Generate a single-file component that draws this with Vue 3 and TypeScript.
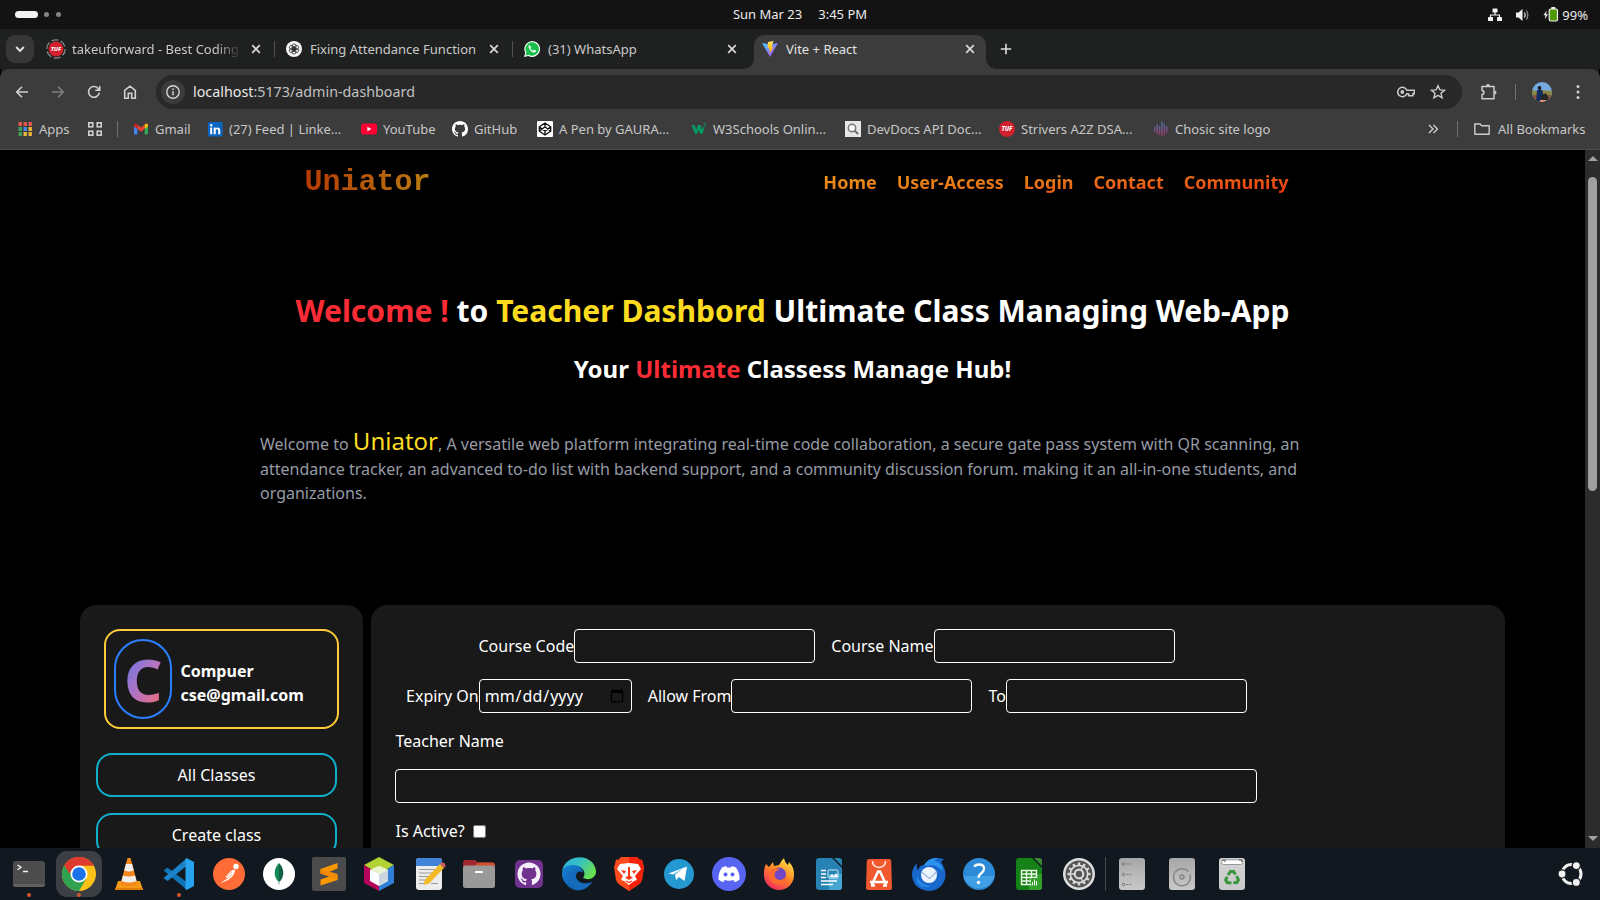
<script setup lang="ts">
interface Bookmark { icon: string; label: string }

const tabs = [
  { icon: 'tuf', title: 'takeuforward - Best Coding', active: false },
  { icon: 'gpt', title: 'Fixing Attendance Function', active: false },
  { icon: 'whatsapp', title: '(31) WhatsApp', active: false },
  { icon: 'vite', title: 'Vite + React', active: true },
]

const bookmarks: Bookmark[] = [
  { icon: 'gmail', label: 'Gmail' },
  { icon: 'linkedin', label: '(27) Feed | Linke...' },
  { icon: 'youtube', label: 'YouTube' },
  { icon: 'github', label: 'GitHub' },
  { icon: 'codepen', label: 'A Pen by GAURA...' },
  { icon: 'w3', label: 'W3Schools Onlin...' },
  { icon: 'devdocs', label: 'DevDocs API Doc...' },
  { icon: 'tufmark', label: 'Strivers A2Z DSA...' },
  { icon: 'chosic', label: 'Chosic site logo' },
]

const navLinks = ['Home', 'User-Access', 'Login', 'Contact', 'Community']
const sideButtons = ['All Classes', 'Create class']

const appColors = ['#e35850', '#e35850', '#e35850', '#3f9f5b', '#4a8af0', '#e9b63a', '#3f9f5b', '#e9b63a', '#e9b63a']
const chosicBars = [
  [1, 6, 5], [3.4, 3, 10], [5.8, 5, 9], [8.2, 0.5, 15], [10.6, 3, 11], [13, 5, 7],
]

const dockApps = [
  'terminal', 'chrome', 'vlc', 'vscode', 'postman', 'mongo', 'sublime', 'netbeans', 'editor', 'files',
  'ghdesktop', 'edge', 'brave', 'telegram', 'discord', 'firefox', 'writer', 'appcenter', 'thunderbird',
  'help', 'calc', 'settings',
]
const dockPlaces = ['drive', 'disk', 'trash']
const running = ['terminal', 'chrome', 'vscode']

const githubPath =
  'M8 0C3.58 0 0 3.58 0 8c0 3.54 2.29 6.53 5.47 7.59.4.07.55-.17.55-.38 0-.19-.01-.82-.01-1.49-2.01.37-2.53-.49-2.69-.94-.09-.23-.48-.94-.82-1.13-.28-.15-.68-.52-.01-.53.63-.01 1.08.58 1.23.82.72 1.21 1.87.87 2.33.66.07-.52.28-.87.51-1.07-1.78-.2-3.64-.89-3.64-3.95 0-.87.31-1.59.82-2.15-.08-.2-.36-1.02.08-2.12 0 0 .67-.21 2.2.82.64-.18 1.32-.27 2-.27s1.36.09 2 .27c1.53-1.04 2.2-.82 2.2-.82.44 1.1.16 1.92.08 2.12.51.56.82 1.27.82 2.15 0 3.07-1.87 3.75-3.65 3.95.29.25.54.73.54 1.48 0 1.07-.01 1.93-.01 2.2 0 .21.15.46.55.38A8.01 8.01 0 0 0 16 8c0-4.42-3.58-8-8-8z'
const ticks = [0, 30, 60, 90, 120, 150, 180, 210, 240, 270, 300, 330]
</script>

<template>
  <div class="screen">
    <header class="topbar">
      <div class="workspaces"><i class="pill"></i><i class="dot"></i><i class="dot"></i></div>
      <div class="clock"><span>Sun Mar 23</span><span>3:45 PM</span></div>
      <div class="status">
        <svg width="16" height="14" viewBox="0 0 16 14">
          <g fill="#f2f2f2"><rect x="5.5" y="0.5" width="5" height="4" rx=".6" /><rect x="1" y="9" width="5" height="4" rx=".6" /><rect x="10" y="9" width="5" height="4" rx=".6" /></g>
          <path d="M8 4v3M3.5 9.500V7h9v2.500" fill="none" stroke="#f2f2f2" stroke-width="1.200" />
        </svg>
        <svg class="volume" width="16" height="14" viewBox="0 0 16 14">
          <path d="M1 4.500h2.500L7.500 1v12L3.500 9.500H1z" fill="#f2f2f2" />
          <path d="M9.300 4.500q1.700 2.500 0 5" fill="none" stroke="#ddd" stroke-width="1.300" />
          <path d="M11.300 2.500q3 4.500 0 9" fill="none" stroke="#888" stroke-width="1.300" />
        </svg>
        <svg class="battery" width="16" height="15" viewBox="0 0 16 15">
          <path d="M3.600 3.500L.5 8.300h1.900l-.5 3.900L5 7.200H3.100z" fill="#eee" />
          <rect x="6.200" y="2" width="8.300" height="12" rx="1.500" fill="#4e9a06" stroke="#f2f2f2" stroke-width="1.200" />
          <rect x="8.300" y="0" width="4" height="2" fill="#f2f2f2" />
        </svg>
        <span>99%</span>
      </div>
    </header>

    <div class="tabstrip">
      <button class="tab-search">
        <svg width="12" height="12" viewBox="0 0 12 12"><path d="M2.200 4L6 7.800 9.800 4" fill="none" stroke="#e4e4e4" stroke-width="1.900" /></svg>
      </button>
      <div v-for="tab in tabs" :key="tab.title" class="tab" :class="{ active: tab.active }">
        <svg v-if="tab.icon === 'tuf'" class="fav wide" viewBox="0 0 20 20">
          <circle cx="10" cy="10" r="9.200" fill="none" stroke="#85898b" stroke-width="1.300" stroke-dasharray="7 2.600" />
          <circle cx="10" cy="10" r="7.500" fill="#d3202f" />
          <text x="10" y="12.200" text-anchor="middle" font-size="6" font-weight="800" font-style="italic" fill="#fff">TUF</text>
        </svg>
        <svg v-else-if="tab.icon === 'gpt'" class="fav" viewBox="0 0 16 16">
          <circle cx="8" cy="8" r="8" fill="#f7f7f7" />
          <g fill="none" stroke="#222" stroke-width=".75">
            <rect v-for="a in [0, 60, 120, 180, 240, 300]" :key="a" x="6.200" y="2.900" width="3.700" height="5.900" rx="1.800" :transform="`rotate(${a} 8 8)`" />
          </g>
        </svg>
        <svg v-else-if="tab.icon === 'whatsapp'" class="fav" viewBox="0 0 16 16">
          <path d="M0 16l1.200-4.300A7.900 7.900 0 1 1 4.300 14.900z" fill="#f4fff6" />
          <path d="M1.500 14.500l.9-3.100A6.700 6.700 0 1 1 4.700 13.700z" fill="#19be4b" />
          <path d="M5.500 4c-.8.500-1.100 1.500-.8 2.500.8 2.500 3 4.600 5.300 5 1.200.1 2-.6 2.100-1.700l-2-1-1 1C7.900 9.400 6.800 8.300 6.300 7l.8-1z" fill="#fff" />
        </svg>
        <svg v-else class="fav" viewBox="0 0 16 16">
          <defs>
            <linearGradient id="vite-a" x1="0" y1="0" x2="1" y2="1"><stop offset="0" stop-color="#41d1ff" /><stop offset="1" stop-color="#bd34fe" /></linearGradient>
            <linearGradient id="vite-b" x1="0" y1="0" x2="0" y2="1"><stop offset="0" stop-color="#ffea83" /><stop offset=".3" stop-color="#ffd028" /><stop offset="1" stop-color="#ffa800" /></linearGradient>
          </defs>
          <path d="M0 2l8 14 8-14-8 1.400z" fill="url(#vite-a)" />
          <path d="M11.500 0L6 1.100l-.4 6 1.700-.4-.5 2.600 1.100-.4L7.300 13l4.200-7-1.900.3z" fill="url(#vite-b)" />
        </svg>
        <span class="tab-title">{{ tab.title }}</span>
        <svg class="close" viewBox="0 0 10 10"><path d="M1.200 1.200l7.600 7.600M8.800 1.200L1.200 8.800" stroke="#d8d8d8" stroke-width="1.700" /></svg>
      </div>
      <svg class="newtab" width="12" height="12" viewBox="0 0 12 12"><path d="M6 .8v10.400M.8 6h10.400" stroke="#ddd" stroke-width="1.600" /></svg>
    </div>

    <div class="toolbar">
      <svg class="tool" viewBox="0 0 20 20"><path d="M16 10H4.800M10 4.700L4.700 10l5.300 5.300" fill="none" stroke="#d0d0d0" stroke-width="1.600" /></svg>
      <svg class="tool" viewBox="0 0 20 20"><path d="M4 10h11.200M10 4.700l5.300 5.300-5.300 5.300" fill="none" stroke="#7f7f7f" stroke-width="1.600" /></svg>
      <svg class="tool" viewBox="0 0 20 20"><path d="M15.300 10.600A5.400 5.400 0 1 1 13.900 6.200l1.400 1.500M15.700 4v4.200h-4.400" fill="none" stroke="#d0d0d0" stroke-width="1.600" /></svg>
      <svg class="tool" viewBox="0 0 20 20"><path d="M4.700 16.200V8.300L10 4.200l5.300 4.100v7.900h-3.600v-5H8.300v5z" fill="none" stroke="#d0d0d0" stroke-width="1.600" /></svg>
      <div class="omnibox">
        <span class="info">
          <svg width="16" height="16" viewBox="0 0 16 16"><circle cx="8" cy="8" r="6.200" fill="none" stroke="#d6d6d6" stroke-width="1.400" /><path d="M8 7.200v4M8 4.600v1.500" stroke="#d6d6d6" stroke-width="1.500" /></svg>
        </span>
        <span class="url"><b>localhost</b>:5173/admin-dashboard</span>
        <svg class="key" width="18" height="12" viewBox="0 0 18 12">
          <path d="M9.800 4.300A4.700 4.700 0 1 0 9.800 7.700h1.800v2.100h4.300V7.700h1.300V4.300z" fill="none" stroke="#ccc" stroke-width="1.500" /><circle cx="5.300" cy="6" r="1.900" fill="#ccc" />
        </svg>
        <svg class="star" width="16" height="16" viewBox="0 0 16 16"><path d="M8 1.700l1.900 4.200 4.600.4-3.500 3 1.100 4.500L8 11.400l-4.100 2.400L5 9.300l-3.500-3 4.600-.4z" fill="none" stroke="#ccc" stroke-width="1.400" /></svg>
      </div>
      <svg class="ext" width="18" height="18" viewBox="0 0 18 18"><path d="M2 3.500h12v12.200H2v-4.100q2-.2 2-2t-2-2z" fill="none" stroke="#ccc" stroke-width="1.500" stroke-linejoin="round" /><path d="M6 3a2 2 0 0 1 4 0zM14.500 7.500a2 2 0 0 1 0 4z" fill="#ccc" /></svg>
      <i class="bar"></i>
      <svg class="avatar" width="20" height="20" viewBox="0 0 20 20">
        <defs><clipPath id="av"><circle cx="10" cy="10" r="10" /></clipPath></defs>
        <g clip-path="url(#av)">
          <rect width="20" height="20" fill="#75a9df" /><path d="M0 8l5 1 5-1 10 1v12H0z" fill="#8b8a45" /><path d="M0 13h20v8H0z" fill="#85513e" />
          <circle cx="7.500" cy="6" r="1.900" fill="#17191d" /><path d="M5 8h5l2 6 3 2v4H4z" fill="#152d60" /><path d="M9 14l5-3 3 6-7 3z" fill="#262528" /><path d="M8 18h7l-3 2H8z" fill="#ee9b73" />
        </g>
      </svg>
      <svg class="menu" width="4" height="16" viewBox="0 0 4 16"><g fill="#d0d0d0"><circle cx="2" cy="2.500" r="1.500" /><circle cx="2" cy="8" r="1.500" /><circle cx="2" cy="13.500" r="1.500" /></g></svg>
    </div>

    <div class="bookmarks">
      <div class="bm apps">
        <svg class="bi" viewBox="0 0 16 16"><rect v-for="(c, i) in appColors" :key="i" :x="1.500 + (i % 3) * 5" :y="1 + Math.floor(i / 3) * 5" width="3.400" height="4" :fill="c" /></svg>
        <span>Apps</span>
      </div>
      <div class="bm">
        <svg class="bi" viewBox="0 0 16 16"><g fill="none" stroke="#cfcfcf" stroke-width="1.600"><rect x="1.800" y="1.800" width="4" height="4" /><rect x="10.200" y="1.800" width="4" height="4" /><rect x="1.800" y="10.200" width="4" height="4" /><rect x="10.200" y="10.200" width="4" height="4" /></g></svg>
      </div>
      <i class="bar"></i>
      <div v-for="b in bookmarks" :key="b.label" class="bm">
        <svg v-if="b.icon === 'gmail'" class="bi" viewBox="0 0 16 16">
          <path d="M1 4v8.600q0 .9 1 .9h2.300V7z" fill="#4285f4" /><path d="M15 4v8.600q0 .9-1 .9h-2.300V7z" fill="#34a853" /><path d="M4.300 3.600L8 6.500l3.700-2.900v4.200L8 10.700 4.300 7.800z" fill="#ea4335" /><path d="M1 4.200q.2-2.200 2.300-1.400l1 .8v4.200L1 5.500z" fill="#c5221f" /><path d="M15 4.200q-.2-2.200-2.300-1.400l-1 .8v4.200L15 5.500z" fill="#fbbc04" />
        </svg>
        <svg v-else-if="b.icon === 'linkedin'" class="bi" viewBox="0 0 16 16">
          <rect x="1" y="1" width="14.500" height="14.500" rx="1.500" fill="#0a66c2" /><path d="M3.200 6.500h2v6.700h-2zM6.700 6.500h1.900v1c1-1.700 4.600-1.600 4.600 1.600v4.100h-2V9.600c0-2-2.500-1.800-2.500 0v3.600h-2z" fill="#fff" /><circle cx="4.200" cy="4.300" r="1.200" fill="#fff" />
        </svg>
        <svg v-else-if="b.icon === 'youtube'" class="bi" viewBox="0 0 16 16"><rect y="2.500" width="16" height="11" rx="2.500" fill="#ff0033" /><path d="M6.400 5.700l4 2.300-4 2.300z" fill="#fff" /></svg>
        <svg v-else-if="b.icon === 'github'" class="bi" viewBox="0 0 16 16"><path :d="githubPath" fill="#fff" /></svg>
        <svg v-else-if="b.icon === 'codepen'" class="bi" viewBox="0 0 16 16">
          <rect width="16" height="16" rx="1" fill="#fff" /><path d="M8 2l5.700 3.800v4.400L8 14l-5.700-3.800V5.800zM8 2v3.700M8 14v-3.700M2.300 5.800L8 10.200l5.700-4.400M2.300 10.200L8 5.800l5.700 4.400" fill="none" stroke="#111" stroke-width="1.300" />
        </svg>
        <svg v-else-if="b.icon === 'w3'" class="bi" viewBox="0 0 16 16"><path d="M.3 4h3.300l1.700 4.500L6.900 4h2.700l1.600 4.500 1.500-2.700.8 1.600-2.300 5.600H9.400L7.700 9.200 5.900 13H4.200z" fill="#059862" /><path d="M12.500 2.200h2l-1 1.300q2 .7.300 2h-1.200" fill="none" stroke="#059862" stroke-width=".9" /></svg>
        <svg v-else-if="b.icon === 'devdocs'" class="bi" viewBox="0 0 16 16"><rect width="16" height="16" fill="#e6e6e6" /><circle cx="7" cy="7" r="3.700" fill="#fafafa" stroke="#777" stroke-width="1.500" /><path d="M9.700 9.700l3.300 3.300" stroke="#666" stroke-width="1.900" /></svg>
        <svg v-else-if="b.icon === 'tufmark'" class="bi" viewBox="0 0 16 16"><circle cx="8" cy="8" r="8" fill="#d3202f" /><text x="8" y="10.300" text-anchor="middle" font-size="6.200" font-weight="800" font-style="italic" fill="#fff">TUF</text></svg>
        <svg v-else class="bi" viewBox="0 0 16 16">
          <defs><linearGradient id="chosic" gradientUnits="userSpaceOnUse" x1="0" y1="0" x2="0" y2="16"><stop offset="0" stop-color="#3c7da9" /><stop offset="1" stop-color="#a52e63" /></linearGradient></defs>
          <rect v-for="(r, i) in chosicBars" :key="i" :x="r[0]" :y="r[1]" width="1.500" :height="r[2]" rx=".7" fill="url(#chosic)" />
        </svg>
        <span>{{ b.label }}</span>
      </div>
      <svg class="more" width="10" height="10" viewBox="0 0 10 10"><path d="M1 1l4 4-4 4M5.500 1l4 4-4 4" fill="none" stroke="#ccc" stroke-width="1.400" /></svg>
      <i class="bar"></i>
      <div class="bm all">
        <svg class="bi" viewBox="0 0 16 16"><path d="M.8 3h5.300l1.600 1.700h7.500v8.600H.8z" fill="none" stroke="#ccc" stroke-width="1.400" stroke-linejoin="round" /></svg>
        <span>All Bookmarks</span>
      </div>
    </div>

    <div class="viewport">
      <main class="page">
        <nav class="nav">
          <div class="brand">Uniator</div>
          <div class="links"><span v-for="l in navLinks" :key="l">{{ l }}</span></div>
        </nav>
        <h1><em>Welcome !</em> to <strong>Teacher Dashbord</strong> Ultimate Class Managing Web-App</h1>
        <h2>Your <em>Ultimate</em> Classess Manage Hub!</h2>
        <p class="intro">
          Welcome to <span>Uniator</span>, A versatile web platform integrating real-time code collaboration, a secure gate pass system with QR scanning, an attendance tracker, an advanced to-do list with backend support, and a community discussion forum. making it an all-in-one students, and organizations.
        </p>
        <section class="panels">
          <aside class="side">
            <div class="profile">
              <div class="initial"><span>C</span></div>
              <div class="who">Compuer<br />cse@gmail.com</div>
            </div>
            <button v-for="s in sideButtons" :key="s" class="side-btn">{{ s }}</button>
          </aside>
          <div class="main-panel">
            <form class="form">
              <div class="row">
                <label>Course Code<input type="text" /></label>
                <label>Course Name<input type="text" /></label>
              </div>
              <div class="row">
                <label>Expiry On<input type="date" class="date" /></label>
                <label>Allow From<input type="text" /></label>
                <label>To<input type="text" /></label>
              </div>
              <div class="teacher">Teacher Name</div>
              <input type="text" class="full" />
              <label class="check">Is Active? <input type="checkbox" /></label>
            </form>
          </div>
        </section>
      </main>
      <div class="scrollbar">
        <i class="up"></i><i class="thumb"></i><i class="down"></i>
      </div>
    </div>

    <footer class="dock">
      <div v-for="a in dockApps" :key="a" class="slot" :class="{ focused: a === 'chrome' }">
        <svg class="di" viewBox="0 0 34 34">
          <template v-if="a === 'terminal'">
            <rect x="1" y="4" width="32" height="26" rx="3" fill="#4c4c4c" /><path d="M1 27h32q0 3-3 3H4q-3 0-3-3" fill="#606060" />
            <path d="M5.500 8l3.500 2.300-3.500 2.400M11 14.500h5" fill="none" stroke="#f4f4f4" stroke-width="1.300" />
          </template>
          <template v-else-if="a === 'chrome'">
            <circle cx="17" cy="17" r="17" fill="#fbc116" />
            <path d="M17 17L2.300 8.500A17 17 0 0 0 17 34l7.400-12.700z" fill="#31a350" />
            <path d="M17 17h-7.600L2.300 8.500A17 17 0 0 1 31.700 8.500H17z" fill="#df3a2e" />
            <path d="M2.300 8.500l7.300 12.700L17 17z" fill="#31a350" />
            <path d="M2.300 8.500A17 17 0 0 1 31.700 8.500H17A8.500 8.500 0 0 0 9.600 12.700l-2 4z" fill="#df3a2e" />
            <circle cx="17" cy="17" r="8.500" fill="#fff" /><circle cx="17" cy="17" r="6.800" fill="#1a73e8" />
          </template>
          <template v-else-if="a === 'vlc'">
            <path d="M6 24h22l3 9H3z" fill="#f59a17" /><path d="M3 31h28v2H3z" fill="#e27c08" />
            <path d="M15.500 1h3l7 26q-8.500 4.500-17 0z" fill="#f5861a" /><path d="M13.900 7h6.200l1.700 6.500q-4.800 2-9.600 0zM11 18.500q6 2 12 0l1.500 5.500q-7.500 3-15 0z" fill="#eee" />
          </template>
          <template v-else-if="a === 'vscode'">
            <path d="M1.500 13.500l4-3L24.500 25v7.500z" fill="#1272b8" />
            <path d="M1.500 21l4 3L24.500 9V1.500z" fill="#1b83ca" />
            <path d="M23.500 1.500q1-.5 2 0l6.500 3.500v24l-6.500 3.500q-1 .5-2 0z" fill="#27a2ed" />
          </template>
          <template v-else-if="a === 'postman'">
            <circle cx="17" cy="17" r="16" fill="#ff6c37" /><circle cx="24" cy="9.500" r="2.700" fill="#fff" />
            <path d="M22.500 12.500q-3.500.5-7 5l-2 2.500 2 1.200L8 26.500l8-3.500q5.500-3 7-9z" fill="#fff" /><path d="M15 19l5-4M14 22l6-4" stroke="#ff6c37" stroke-width=".6" />
          </template>
          <template v-else-if="a === 'mongo'">
            <circle cx="17" cy="17" r="16" fill="#fff" /><path d="M17 6c5 5 6.500 13 0 19.500z" fill="#116149" /><path d="M17 6c-5 5-6.500 13 0 19.500z" fill="#138a56" /><path d="M17 24v3.500" stroke="#9ab9a9" stroke-width="1.200" />
          </template>
          <template v-else-if="a === 'sublime'">
            <rect width="34" height="34" rx="2" fill="#4b4b4b" /><path d="M8.500 12L25.500 6v5.500L17 15l8.500 2.500V23l-17 5.500v-6l9-3-9-3z" fill="#ff9800" /><path d="M8.500 12v4.500l17 6V17z" fill="#f28a05" />
          </template>
          <template v-else-if="a === 'netbeans'">
            <path d="M17 0l15 8-15 9L2 8z" fill="#b3d334" /><path d="M2 8l15 9v17L2 26z" fill="#b6065b" /><path d="M32 8L17 17v17l15-8z" fill="#2f7fd6" />
            <path d="M17 9l9 4v11l-9 5-9-5V13z" fill="#fff" /><path d="M17 17l9-4v11l-9 5z" fill="#cbd6df" /><path d="M17 9l9 4-9 4-9-4z" fill="#eaf3cf" />
          </template>
          <template v-else-if="a === 'editor'">
            <rect x="4" y="1" width="26" height="32" rx="3" fill="#ececec" /><path d="M4 9V4q0-3 3-3h20q3 0 3 3v5z" fill="#3f82d8" />
            <path d="M7 12.500h18M7 16h14M7 19.500h11M7 23h8M7 26.500h5M19 26.500h7" stroke="#9b9b9b" stroke-width="1" />
            <path d="M13 22.500L28 7l4 4-15 15.500-5.500 1.500z" fill="#f3b927" /><path d="M28 7l1.500-1.500q4-.5 4 4L32 11z" fill="#d35b62" />
          </template>
          <template v-else-if="a === 'files'">
            <path d="M1 6q0-3 3-3h9l3 2.500h14q3 0 3 3V14H1z" fill="#a1282f" /><path d="M16 5.500h14q3 0 3 3V11H10z" fill="#cf502c" />
            <rect x="1" y="8.500" width="32" height="22.500" rx="2.500" fill="#999" /><rect x="13" y="14" width="8" height="2" rx=".6" fill="#fff" />
          </template>
          <template v-else-if="a === 'ghdesktop'">
            <rect x="3" y="3" width="28" height="28" rx="5" fill="#71318f" />
            <g transform="translate(5.500 5.500) scale(1.440)"><path :d="githubPath" fill="#f5effa" /></g>
          </template>
          <template v-else-if="a === 'edge'">
            <defs>
              <linearGradient id="edge-a" x1="0" y1="0" x2="1" y2=".5"><stop offset="0" stop-color="#2fa9dd" /><stop offset=".5" stop-color="#35c1c6" /><stop offset="1" stop-color="#66de51" /></linearGradient>
              <linearGradient id="edge-b" x1="0" y1="0" x2="1" y2="1"><stop offset="0" stop-color="#1683d7" /><stop offset="1" stop-color="#0b4d94" /></linearGradient>
            </defs>
            <path d="M0 15C2-4 32-5 34 14c.5 7-7 10-13 7 4-6-1-12-8-12C6 8 2 11 0 15z" fill="url(#edge-a)" />
            <path d="M0 16c1-6 6-8 11-8 7 0 10 4 10 8-3-3-7-1-7 3 0 5 7 10 16 6-5 9-16 11-23 5C2 26-.5 20 0 16z" fill="url(#edge-b)" />
            <path d="M7 20c0-6 5-9 10-8-7 2-5 20 13 13-5 9-23 13-23-5z" fill="#176bbd" />
          </template>
          <template v-else-if="a === 'brave'">
            <path d="M9 0h16l3 3 2-.5L31 7l1 3-2 13q-1 3-4 5l-9 6-9-6q-3-2-4-5L2 10l1-3 1-4.500 2 .5z" fill="#fb4a1c" /><path d="M17 0h8l3 3 2-.5L31 7l1 3-2 13q-1 3-4 5l-9 6z" fill="#f3230b" />
            <path d="M8 7l9-1 9 1 3 5-6 7 2 4-3 1-5 4-5-4-3-1 2-4-6-7z" fill="#fff" /><path d="M9 13l5 1-2 3zM25 13l-5 1 2 3zM16 10h2v9l3 1.500-4 2.500-4-2.500 3-1.500z" fill="#f73815" />
            <path d="M14 24l3 1.500 3-1.500" fill="none" stroke="#f73815" stroke-width="1.300" />
          </template>
          <template v-else-if="a === 'telegram'">
            <circle cx="17" cy="17" r="15" fill="#2498d1" /><path d="M6.500 16.500L25 9.500 22.500 24l-5.500-4-3 3-1-5.500 8-6-10 6z" fill="#fff" />
          </template>
          <template v-else-if="a === 'discord'">
            <circle cx="17" cy="17" r="17" fill="#5865f2" /><path d="M10 10.500l4-1.500 1 1.500h4L20 9l4 1.500q4 6 3.500 12-2 2-5 2.500l-1-2q-4.500 1.300-9 0l-1 2q-3-.5-5-2.500Q6 16 10 10.500z" fill="#fff" /><circle cx="13.500" cy="17.500" r="2" fill="#5865f2" /><circle cx="20.500" cy="17.500" r="2" fill="#5865f2" />
          </template>
          <template v-else-if="a === 'firefox'">
            <defs><linearGradient id="fx" x1=".8" y1="0" x2=".2" y2="1"><stop offset="0" stop-color="#ffe84a" /><stop offset=".45" stop-color="#ff8b25" /><stop offset="1" stop-color="#f12264" /></linearGradient></defs>
            <path d="M4 7l3 3 4-5 1 4 5-1q2-4 5-7 1 5 4 7l1-3q5 5 5 12a15 15 0 0 1-30 2Q1.500 12 4 7z" fill="url(#fx)" />
            <circle cx="17" cy="17.500" r="7" fill="#7147c7" /><path d="M8 13q5-4 10 0-4 0-5 3-2 5 4 7 5 0 7-4 1 8-7 9-9-1-10-9z" fill="#fb6b30" />
          </template>
          <template v-else-if="a === 'writer'">
            <path d="M7 1h13l10 10v19q0 3-3 3H7q-3 0-3-3V4q0-3 3-3z" fill="#2783b3" /><path d="M17 17h13v13q0 3-3 3H17z" fill="#46a6d0" /><path d="M22 1h5q3 0 3 3v5z" fill="#2a83ad" />
            <path d="M9 13.500h5M9 17h5M9 20.500h5M9 24h16M9 27.500h12" stroke="#fff" stroke-width="1.700" /><rect x="16" y="13" width="10" height="8" rx="1" fill="none" stroke="#cceaf5" /><path d="M17 20l3-3 2 2 2-3 2 4z" fill="#fff" />
          </template>
          <template v-else-if="a === 'appcenter'">
            <path d="M7 2h20q2 0 2.200 2L30 31q0 2-2 2H6q-2 0-2-2L4.800 4Q5 2 7 2z" fill="#f0592f" /><path d="M10.500 4q0 6 6.500 6.500 6.500-.5 6.500-6.500" fill="none" stroke="#ffe6dc" stroke-width="1.500" />
            <path d="M10 27.500l6-13h2l6 13M8 25h18M9 28.500h4M21 28.500h4" fill="none" stroke="#fff" stroke-width="2.500" />
          </template>
          <template v-else-if="a === 'thunderbird'">
            <path d="M12 8q5-8 14-7l6 1-3 3q6 9 4 17-4 12-17 12Q1 32 0 18q0-7 5-12-1 4 1 7 2-5 6-5z" fill="#1767cd" /><path d="M12 8q5-8 14-7l-4 3q8 1 9 10-8-8-16-5z" fill="#2c92ee" /><circle cx="17" cy="18" r="8" fill="#eaf2fb" /><path d="M9.500 15l8 6.500 7.500-7" fill="none" stroke="#9db9de" stroke-width="1.200" /><path d="M5 18q3 11 15 11-11 4-15-4z" fill="#2788e4" />
          </template>
          <template v-else-if="a === 'help'">
            <circle cx="17" cy="17" r="16" fill="#2c8ad6" /><path d="M1.500 19h31A16 16 0 0 1 1.500 19z" fill="#41a0e5" />
            <path d="M12 9.500q2-2 5-2 5 0 5 4.200 0 2.500-2.800 4.500-2.700 2-2.700 4.500" fill="none" stroke="#fff" stroke-width="2.300" /><circle cx="16.500" cy="25.500" r="1.700" fill="#fff" />
          </template>
          <template v-else-if="a === 'calc'">
            <path d="M7 1h13l10 10v19q0 3-3 3H7q-3 0-3-3V4q0-3 3-3z" fill="#148216" /><path d="M17 17h13v13q0 3-3 3H17z" fill="#31a12c" /><path d="M22 1h5q3 0 3 3v5z" fill="#3a8a35" />
            <path d="M9.500 13.500h15v14h-15zM9.500 17h15M9.500 20.500h15M9.500 24h15M14.500 13.500v14M19.500 13.500v14" fill="none" stroke="#eef8e9" stroke-width="1.400" /><rect x="19" y="21" width="7" height="7" rx="1" fill="#31a12c" /><path d="M20.500 28v-3M22.500 28v-5.500M24.500 28v-4" stroke="#fff" stroke-width="1" />
          </template>
          <template v-else>
            <circle cx="17" cy="17" r="16" fill="#dedede" /><circle cx="17" cy="17" r="13.500" fill="#555" />
            <circle cx="17" cy="17" r="8.700" fill="none" stroke="#d9d9d9" stroke-width="1.700" />
            <rect v-for="t in ticks" :key="t" x="15.800" y="5.500" width="2.400" height="3" fill="#d9d9d9" :transform="`rotate(${t} 17 17)`" />
            <circle cx="17" cy="17" r="4.300" fill="none" stroke="#d9d9d9" stroke-width="2.200" /><path d="M13 17H9M19 13l2-4M19 21l2 4" stroke="#d9d9d9" stroke-width="1.600" />
          </template>
        </svg>
        <i v-if="running.includes(a)" class="run"></i>
      </div>
      <i class="dock-bar"></i>
      <div v-for="p in dockPlaces" :key="p" class="slot">
        <svg class="di" viewBox="0 0 34 34">
          <defs><linearGradient :id="`g-${p}`" x1="0" y1="0" x2="0" y2="1"><stop offset="0" :stop-color="p === 'trash' ? '#d4d4d4' : '#a6a6a6'" /><stop offset="1" stop-color="#c9c9c9" /></linearGradient></defs>
          <rect x="4" y="1" width="26" height="32" rx="3" :fill="`url(#g-${p})`" />
          <g v-if="p === 'drive'" fill="none" stroke="#787878" stroke-width="1">
            <g v-for="y in [7, 17.500, 27.500]" :key="y"><circle cx="8.500" :cy="y" r="1.300" /><path :d="`M11.500 ${y}h2M14.500 ${y}h1.500`" /></g>
          </g>
          <g v-else-if="p === 'disk'" fill="none" stroke="#858585" stroke-width="1.400">
            <path d="M20.500 12.500A8.500 8.500 0 1 0 25 17.500M21 12.200l2.500 2.500" /><circle cx="17" cy="20" r="2" />
          </g>
          <template v-else>
            <rect x="6.500" y="2.800" width="21" height="4.700" rx="2" fill="#fff" stroke="#777" stroke-width=".7" /><path d="M7 3h3v2M24 3h3v2" stroke="#555" fill="none" />
            <g fill="none" stroke="#36963b" stroke-width="3"><path d="M13 18l2.500-3.500h3l2 3" /><path d="M13 18l2.500-3.500h3l2 3" transform="rotate(120 17 21)" /><path d="M13 18l2.500-3.500h3l2 3" transform="rotate(240 17 21)" /></g>
          </template>
        </svg>
      </div>
      <svg class="ubuntu" width="26" height="26" viewBox="0 0 26 26">
        <circle cx="13.500" cy="13" r="9.500" fill="none" stroke="#f2f2f2" stroke-width="3" />
        <g fill="#f2f2f2" stroke="#12181f" stroke-width="1.300"><circle cx="4" cy="13" r="4.100" /><circle cx="18.300" cy="4.600" r="4.100" /><circle cx="18.300" cy="21.400" r="4.100" /></g>
      </svg>
    </footer>
  </div>
</template>

<style>
body { background: #000; overflow: hidden; }
</style>

<style scoped>
* { box-sizing: border-box; }
.screen { width: 1600px; height: 900px; display: flex; flex-direction: column; overflow: hidden; background: #000; color: #fff; font-family: "Noto Sans", sans-serif; font-size: 13px; }
svg { display: block; flex: none; }
svg text { font-family: "Noto Sans", sans-serif; }
button { font: inherit; color: inherit; background: none; padding: 0; }

.topbar { height: 29px; flex: none; background: #131313; display: grid; grid-template-columns: 1fr auto 1fr; align-items: center; color: #ebebeb; }
.workspaces { display: flex; align-items: center; padding-left: 15px; gap: 6px; }
.pill { width: 23px; height: 7px; border-radius: 4px; background: #f2f2f2; }
.dot { width: 5px; height: 5px; border-radius: 50%; background: #858585; }
.dot + .dot { margin-left: 1px; }
.clock { display: flex; gap: 16px; margin-top: -1px; }
.status { display: flex; align-items: center; justify-content: flex-end; padding-right: 12px; }
.volume { margin-left: 12px; }
.battery { margin: 0 3px 0 12px; }

.tabstrip { height: 40px; flex: none; background: #1f2120; display: flex; align-items: flex-start; padding-top: 6px; }
.tab-search { width: 28px; height: 28px; margin: 0 3px 0 6px; border: 0; border-radius: 9px; background: #373737; display: flex; align-items: center; justify-content: center; }
.tab { position: relative; width: 238px; height: 28px; display: flex; align-items: center; padding: 0 14px 0 11px; color: #c9c9c9; }
.tab:not(.active) + .tab:not(.active)::before { content: ""; position: absolute; left: -1px; top: 6px; width: 1px; height: 16px; background: #505050; }
.fav { width: 16px; height: 16px; }
.fav.wide { width: 20px; height: 20px; margin: 0 -2px; }
.tab-title { flex: 1; margin: 0 10px 0 8px; white-space: nowrap; overflow: hidden; }
.tab:nth-child(2) .tab-title { mask-image: linear-gradient(90deg, #000 85%, rgba(0, 0, 0, 0.15) 98%); }
.close { width: 10px; height: 10px; }
.tab.active { height: 34px; width: 232px; margin: 0 14px 0 3px; padding: 0 11px 6px 8px; border-radius: 10px 10px 0 0; background: #3c3c3c; color: #e3e3e3; }
.tab.active::before, .tab.active::after { content: ""; position: absolute; bottom: 0; width: 10px; height: 10px; }
.tab.active::before { left: -10px; background: radial-gradient(circle at 0 0, transparent 9.500px, #3c3c3c 10px); }
.tab.active::after { right: -10px; background: radial-gradient(circle at 100% 0, transparent 9.500px, #3c3c3c 10px); }
.newtab { margin-top: 8px; }

.toolbar { height: 46px; flex: none; display: flex; align-items: center; padding: 0 20px 0 12px; background: #3c3c3c; border-radius: 9px 9px 0 0; box-shadow: 0 -10px 0 -1px #1f2120; position: relative; clip-path: inset(0); }
.tool { width: 20px; height: 20px; margin-right: 16px; }
.omnibox { width: 1306px; height: 34px; border-radius: 17px; background: #282828; display: flex; align-items: center; padding: 0 16px 0 5px; margin-right: 18px; }
.info { width: 24px; height: 24px; border-radius: 50%; background: #3c3c3c; display: flex; align-items: center; justify-content: center; }
.url { flex: 1; margin: -2px 0 0 8px; font-size: 14.300px; color: #c0c0c0; }
.url b { font-weight: 400; color: #e8e8e8; }
.star { margin-left: 15px; }
.bar { width: 1px; height: 16px; background: #707070; }
.ext + .bar { margin: 0 16px 0 17px; }
.menu { margin-left: 24px; }

.bookmarks { height: 35px; flex: none; background: #3c3c3c; border-bottom: 1px solid #4b4b4b; display: grid; grid-template-columns: 70px 30px 16px 74px 154px 91px 85px 154px 154px 154px 154px 275px 29px 17px auto; align-items: start; padding: 6px 0 0 17px; color: #c7c7c7; }
.bm { display: flex; align-items: center; gap: 6px; height: 16px; white-space: nowrap; }
.bm.all { gap: 8px; }
.bi { width: 16px; height: 16px; }
.more { margin: 3px 0 0; }

.viewport { height: 698px; flex: none; display: flex; overflow: hidden; }
.page { width: 1585px; font-size: 16px; line-height: 24px; }
.nav { display: flex; justify-content: space-between; align-items: flex-start; padding: 14px 296.500px 0 304.500px; height: 143px; }
.brand { font: 700 30px/36px "Liberation Mono", monospace; color: transparent; background: linear-gradient(to right, #b53a04, #b97c10); background-clip: text; }
.links { margin-top: 4px; display: flex; gap: 20px; font-size: 18px; font-weight: 700; line-height: 28px; color: transparent; background: linear-gradient(to bottom right, #eda01e, #e87517 50%, #ee2a10); background-clip: text; }
h1, h2 { margin: 0; text-align: center; font-weight: 700; }
h1 { font-size: 30.060px; line-height: 36px; }
h2 { font-size: 24px; line-height: 32px; margin-top: 24px; }
em { font-style: normal; color: #fb2c36; }
h1 strong { font-weight: 700; color: #fddc20; }
.intro { margin: 40px 0 0 260px; width: 1064px; height: 80px; color: #969ba5; }
.intro span { font-size: 24px; line-height: 32px; color: #fddc20; }
.panels { margin: 100px 80px 0; display: flex; gap: 8px; height: 400px; }
.side, .main-panel { background: #191919; border-radius: 16px; }
.side { width: 283px; padding: 24px 16px; }
.profile { margin: 0 8px 24px; height: 100px; width: 235px; border: 2px solid #fdcb38; border-radius: 16px; padding: 8px; display: flex; align-items: center; gap: 8.500px; }
.initial { width: 58px; height: 80px; border: 2px solid #2b7fff; border-radius: 40px; padding: 8px; font-size: 60px; font-weight: 700; line-height: 60px; }
.initial span { display: block; color: transparent; background: linear-gradient(to bottom right, #5b78ee, #b673be 55%, #f56a70); background-clip: text; }
.who { font-weight: 700; padding-top: 7px; }
.side-btn { display: block; width: 241px; height: 44px; border: 2px solid #10b0cc; border-radius: 16px; margin-bottom: 16px; }
.main-panel { width: 1134px; padding: 24px 24.500px; }
.form { width: 862px; }
.row { display: flex; justify-content: center; gap: 16px; margin-bottom: 16px; }
.row label { display: flex; align-items: center; white-space: nowrap; }
input { font: inherit; color: #fff; background: transparent; border: 1px solid #fff; border-radius: 4px; height: 34px; width: 241px; padding: 4px; margin: 0; }
.date { width: 153px; }
.teacher { margin-bottom: 16px; }
.full { display: block; width: 862px; margin: 0 0 16px -0.500px; }
.check { display: flex; align-items: center; gap: 8px; }
.check input { width: 13px; height: 13px; }

.scrollbar { width: 15px; background: #2c2c2c; display: flex; flex-direction: column; align-items: center; padding: 6px 0 7px; }
.up, .down { border: 5px solid transparent; }
.up { border-top: 0; border-bottom: 5px solid #a0a0a0; }
.down { border-bottom: 0; border-top: 5px solid #a0a0a0; margin-top: auto; }
.thumb { width: 9px; height: 314px; margin-top: 16px; border-radius: 5px; background: #9f9f9f; }

.dock { height: 52px; flex: none; background: #12181f; display: flex; align-items: center; padding-left: 4px; }
.slot { position: relative; width: 50px; height: 46px; display: flex; align-items: center; justify-content: center; }
.slot.focused::before { content: ""; position: absolute; left: 2px; width: 46px; height: 46px; border-radius: 11px; background: #3c4044; }
.di { width: 34px; height: 34px; position: relative; }
.run { position: absolute; bottom: 0; left: 23px; width: 4px; height: 4px; border-radius: 50%; background: #d4552c; }
.dock-bar { width: 1px; height: 34px; background: #43484d; margin: 0 1px; }
.ubuntu { margin-left: auto; margin-right: 16px; }
</style>
